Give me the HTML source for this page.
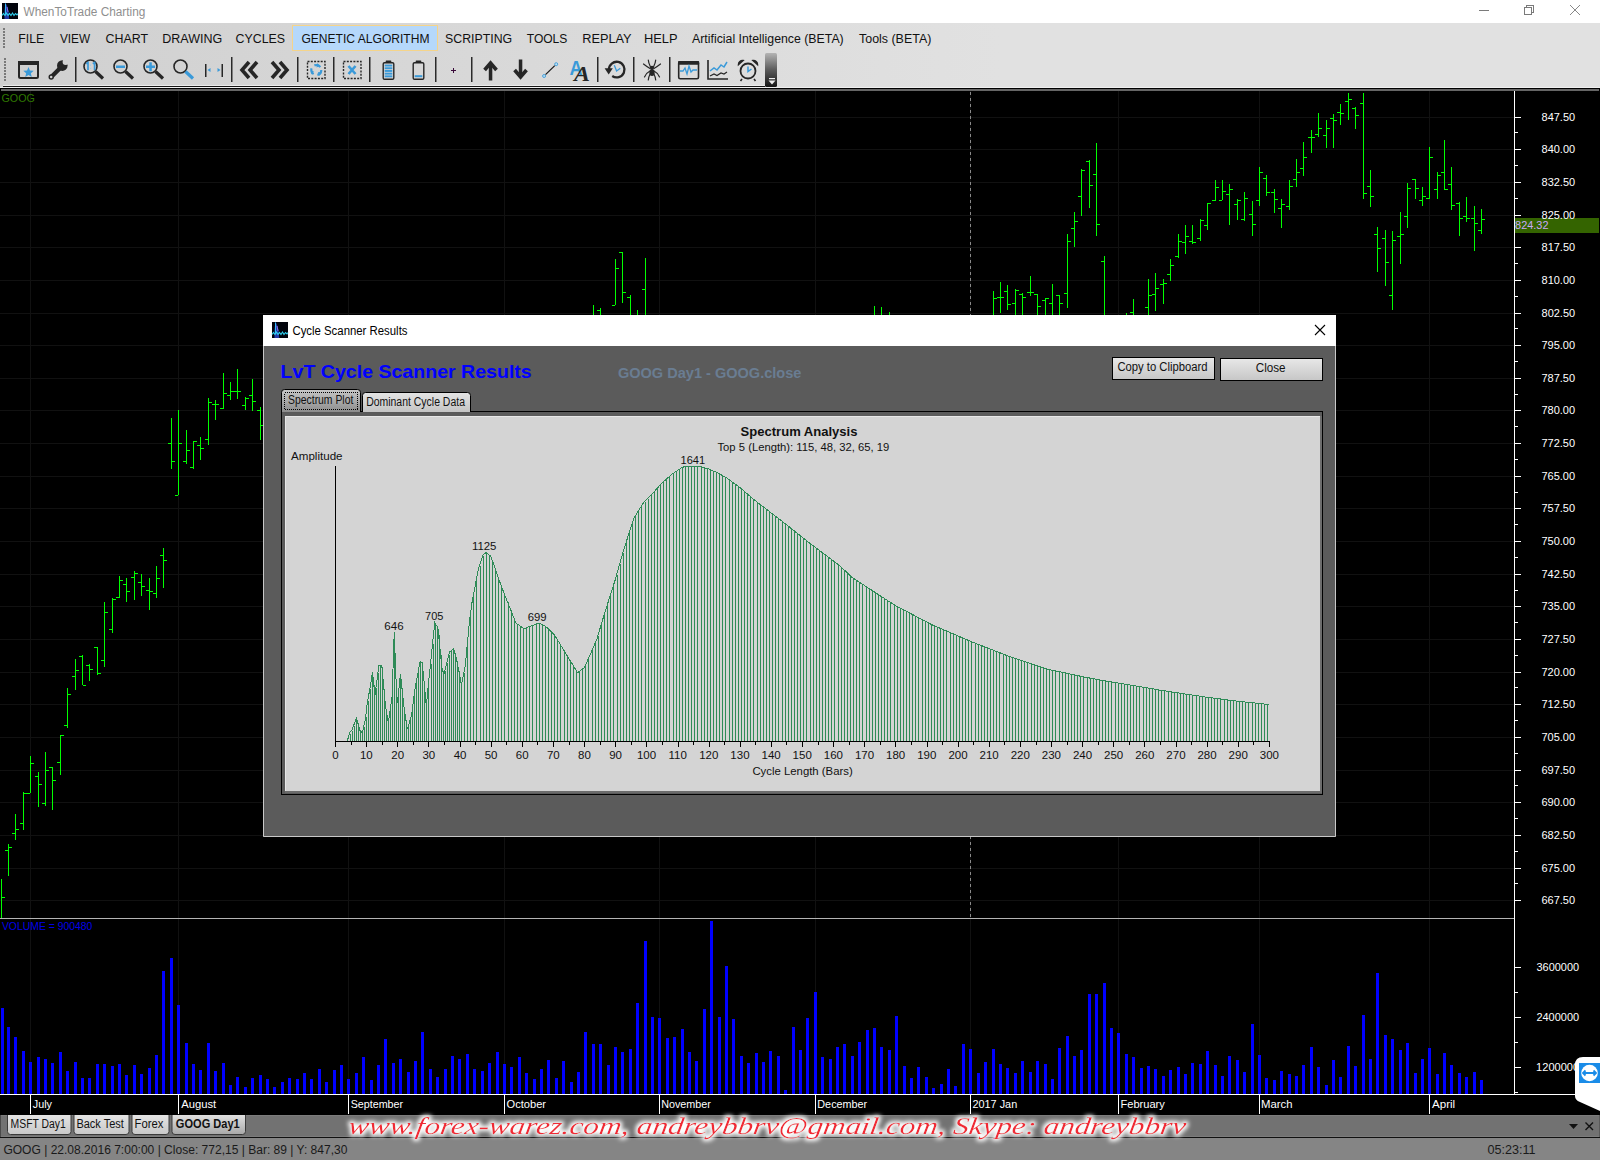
<!DOCTYPE html>
<html><head><meta charset="utf-8"><style>html,body{margin:0;padding:0;width:1600px;height:1160px;overflow:hidden;background:#000;font-family:"Liberation Sans",sans-serif;white-space:nowrap}svg{overflow:hidden}</style></head><body>
<svg style="position:absolute;left:0;top:0" width="1600" height="1160" shape-rendering="crispEdges"><rect x="0" y="91" width="1600" height="1024" fill="#000"/><path d="M0 117.5H1514 M0 149.5H1514 M0 182.5H1514 M0 215.5H1514 M0 247.5H1514 M0 280.5H1514 M0 313.5H1514 M0 345.5H1514 M0 378.5H1514 M0 410.5H1514 M0 443.5H1514 M0 476.5H1514 M0 508.5H1514 M0 541.5H1514 M0 574.5H1514 M0 606.5H1514 M0 639.5H1514 M0 672.5H1514 M0 704.5H1514 M0 737.5H1514 M0 770.5H1514 M0 802.5H1514 M0 835.5H1514 M0 868.5H1514 M0 900.5H1514" stroke="#111111" stroke-width="1" fill="none"/><path d="M30.5 91V1094 M178.5 91V1094 M348.5 91V1094 M504.5 91V1094 M659.5 91V1094 M815.5 91V1094 M1118.5 91V1094 M1259.5 91V1094 M1429.5 91V1094" stroke="#111111" stroke-width="1" fill="none"/><path d="M970.5 91V918" stroke="#111111" stroke-width="1" fill="none"/><path d="M970.5 92V918" stroke="#8a8a8a" stroke-width="1" stroke-dasharray="3,3" fill="none"/><path d="M970.5 918V1094" stroke="#111111" stroke-width="1" fill="none"/><rect x="0" y="918" width="1514" height="1" fill="#b4b4b4"/><path d="M1.5 879V918 M2 897.5H5 M8.5 844V876 M5 850.5H8 M9 847.5H12 M15.5 814V840 M12 833.5H15 M16 829.5H19 M23.5 792V830 M20 823.5H23 M24 793.5H27 M30.5 756V793 M27 793.5H30 M31 763.5H34 M38.5 772V807 M35 776.5H38 M39 784.5H42 M45.5 752V806 M42 803.5H45 M46 770.5H49 M52.5 767V810 M49 767.5H52 M53 780.5H56 M60.5 735V775 M57 762.5H60 M61 735.5H64 M67.5 688V728 M64 725.5H67 M68 694.5H71 M75.5 659V690 M72 676.5H75 M76 670.5H79 M82.5 655V685 M79 656.5H82 M83 685.5H86 M89.5 664V681 M86 665.5H89 M90 669.5H93 M97.5 647V675 M94 647.5H97 M98 673.5H101 M104.5 602V667 M101 660.5H104 M105 612.5H108 M112.5 598V633 M109 629.5H112 M113 599.5H116 M119.5 576V598 M116 597.5H119 M120 580.5H123 M126.5 578V602 M123 584.5H126 M127 591.5H130 M134.5 571V600 M131 577.5H134 M135 573.5H138 M141.5 574V596 M138 582.5H141 M142 586.5H145 M149.5 578V610 M146 590.5H149 M150 591.5H153 M156.5 566V598 M153 593.5H156 M157 578.5H160 M163.5 548V588 M160 555.5H163 M164 560.5H167 M171.5 418V469 M168 443.5H171 M172 461.5H175 M178.5 410V495 M175 495.5H178 M179 443.5H182 M186.5 430V464 M183 461.5H186 M187 450.5H190 M193.5 441V469 M190 467.5H193 M194 441.5H197 M200.5 437V460 M197 445.5H200 M201 448.5H204 M208.5 398V445 M205 439.5H208 M209 402.5H212 M215.5 400V420 M212 404.5H215 M216 404.5H219 M223.5 373V409 M220 408.5H223 M224 393.5H227 M230.5 382V400 M227 395.5H230 M231 391.5H234 M237.5 369V399 M234 391.5H237 M238 391.5H241 M245.5 397V410 M242 405.5H245 M246 398.5H249 M252.5 379V411 M249 395.5H252 M253 401.5H256 M260.5 407V440 M257 410.5H260 M261 425.5H264 M593.5 305V330 M600.5 308V330 M597 310.5H600 M615.5 259V305 M612 305.5H615 M616 268.5H619 M622.5 252V303 M619 252.5H622 M623 292.5H626 M630.5 295V330 M627 297.5H630 M637.5 310V330 M645.5 258V330 M642 289.5H645 M874.5 306V330 M881.5 307V330 M889.5 312V330 M993.5 291V330 M994 298.5H997 M1000.5 282V313 M997 297.5H1000 M1001 297.5H1004 M1007.5 285V310 M1004 291.5H1007 M1008 304.5H1011 M1015.5 289V330 M1012 303.5H1015 M1016 290.5H1019 M1022.5 293V330 M1019 294.5H1022 M1023 297.5H1026 M1030.5 276V296 M1027 292.5H1030 M1031 292.5H1034 M1037.5 294V330 M1034 294.5H1037 M1038 306.5H1041 M1045.5 298V330 M1042 300.5H1045 M1046 298.5H1049 M1052.5 284V330 M1049 303.5H1052 M1059.5 295V330 M1056 295.5H1059 M1060 303.5H1063 M1067.5 234V308 M1064 293.5H1067 M1068 241.5H1071 M1074.5 212V247 M1071 228.5H1074 M1075 221.5H1078 M1081.5 169V216 M1078 196.5H1081 M1082 170.5H1085 M1089.5 160V208 M1086 161.5H1089 M1090 185.5H1093 M1096.5 143V236 M1093 174.5H1096 M1097 224.5H1100 M1104.5 256V330 M1101 261.5H1104 M1126.5 313V330 M1133.5 299V330 M1130 312.5H1133 M1148.5 279V330 M1145 307.5H1148 M1149 295.5H1152 M1155.5 273V311 M1152 294.5H1155 M1156 288.5H1159 M1163.5 279V304 M1160 284.5H1163 M1164 283.5H1167 M1170.5 259V281 M1167 274.5H1170 M1171 265.5H1174 M1178.5 234V258 M1175 256.5H1178 M1179 241.5H1182 M1185.5 225V254 M1182 242.5H1185 M1186 236.5H1189 M1192.5 225V244 M1189 241.5H1192 M1193 242.5H1196 M1200.5 219V241 M1197 238.5H1200 M1201 220.5H1204 M1207.5 203V230 M1204 225.5H1207 M1208 203.5H1211 M1215.5 180V201 M1212 200.5H1215 M1216 187.5H1219 M1222.5 180V200 M1219 200.5H1222 M1223 191.5H1226 M1229.5 184V225 M1226 194.5H1229 M1230 189.5H1233 M1237.5 199V220 M1234 204.5H1237 M1238 200.5H1241 M1244.5 192V221 M1241 219.5H1244 M1245 198.5H1248 M1252.5 201V236 M1249 214.5H1252 M1253 224.5H1256 M1259.5 167V206 M1256 200.5H1259 M1260 172.5H1263 M1266.5 175V196 M1263 178.5H1266 M1267 192.5H1270 M1274.5 189V213 M1271 192.5H1274 M1275 199.5H1278 M1281.5 199V228 M1278 208.5H1281 M1282 204.5H1285 M1289.5 180V210 M1286 206.5H1289 M1290 186.5H1293 M1296.5 159V187 M1293 179.5H1296 M1297 172.5H1300 M1303.5 142V176 M1300 168.5H1303 M1304 157.5H1307 M1311.5 130V153 M1308 137.5H1311 M1312 137.5H1315 M1318.5 113V137 M1315 134.5H1318 M1319 128.5H1322 M1326.5 120V148 M1323 135.5H1326 M1327 128.5H1330 M1333.5 114V148 M1330 118.5H1333 M1334 120.5H1337 M1340.5 104V125 M1337 112.5H1340 M1341 113.5H1344 M1348.5 93V120 M1345 101.5H1348 M1349 99.5H1352 M1355.5 107V129 M1352 108.5H1355 M1356 115.5H1359 M1363.5 93V199 M1360 103.5H1363 M1364 193.5H1367 M1370.5 170V207 M1367 186.5H1370 M1371 196.5H1374 M1377.5 227V272 M1374 234.5H1377 M1378 248.5H1381 M1385.5 230V286 M1382 238.5H1385 M1386 262.5H1389 M1392.5 231V310 M1389 295.5H1392 M1393 240.5H1396 M1400.5 212V264 M1397 236.5H1400 M1401 234.5H1404 M1407.5 183V228 M1404 216.5H1407 M1408 188.5H1411 M1415.5 179V199 M1412 179.5H1415 M1416 188.5H1419 M1422.5 187V206 M1419 200.5H1422 M1423 196.5H1426 M1429.5 147V199 M1426 198.5H1429 M1430 157.5H1433 M1437.5 172V199 M1434 189.5H1437 M1438 175.5H1441 M1444.5 140V190 M1441 172.5H1444 M1445 189.5H1448 M1451.5 167V210 M1448 184.5H1451 M1452 205.5H1455 M1459.5 202V236 M1456 203.5H1459 M1460 218.5H1463 M1466.5 197V222 M1463 216.5H1466 M1467 218.5H1470 M1474.5 206V251 M1471 218.5H1474 M1475 223.5H1478 M1481.5 209V234 M1478 230.5H1481 M1482 219.5H1485" stroke="#00ff00" stroke-width="1" fill="none"/><path d="M1 1008h3V1094h-3Z M7 1027h3V1094h-3Z M14 1037h3V1094h-3Z M22 1051h3V1094h-3Z M29 1062h3V1094h-3Z M37 1057h3V1094h-3Z M44 1059h3V1094h-3Z M51 1063h3V1094h-3Z M59 1052h3V1094h-3Z M66 1071h3V1094h-3Z M74 1062h3V1094h-3Z M81 1078h3V1094h-3Z M88 1078h3V1094h-3Z M96 1064h3V1094h-3Z M103 1064h3V1094h-3Z M111 1066h3V1094h-3Z M118 1064h3V1094h-3Z M125 1075h3V1094h-3Z M133 1065h3V1094h-3Z M140 1074h3V1094h-3Z M148 1068h3V1094h-3Z M155 1055h3V1094h-3Z M162 971h3V1094h-3Z M170 958h3V1094h-3Z M177 1005h3V1094h-3Z M185 1043h3V1094h-3Z M192 1064h3V1094h-3Z M199 1070h3V1094h-3Z M207 1043h3V1094h-3Z M214 1071h3V1094h-3Z M222 1063h3V1094h-3Z M229 1085h3V1094h-3Z M236 1077h3V1094h-3Z M244 1087h3V1094h-3Z M251 1078h3V1094h-3Z M259 1075h3V1094h-3Z M266 1079h3V1094h-3Z M273 1087h3V1094h-3Z M281 1082h3V1094h-3Z M288 1078h3V1094h-3Z M296 1079h3V1094h-3Z M303 1073h3V1094h-3Z M310 1079h3V1094h-3Z M318 1069h3V1094h-3Z M325 1082h3V1094h-3Z M333 1070h3V1094h-3Z M340 1065h3V1094h-3Z M347 1079h3V1094h-3Z M355 1073h3V1094h-3Z M362 1057h3V1094h-3Z M370 1080h3V1094h-3Z M377 1065h3V1094h-3Z M384 1039h3V1094h-3Z M392 1063h3V1094h-3Z M399 1059h3V1094h-3Z M407 1072h3V1094h-3Z M414 1061h3V1094h-3Z M421 1032h3V1094h-3Z M429 1069h3V1094h-3Z M436 1077h3V1094h-3Z M444 1069h3V1094h-3Z M451 1056h3V1094h-3Z M458 1059h3V1094h-3Z M466 1054h3V1094h-3Z M473 1069h3V1094h-3Z M481 1071h3V1094h-3Z M488 1063h3V1094h-3Z M496 1052h3V1094h-3Z M503 1064h3V1094h-3Z M510 1067h3V1094h-3Z M518 1057h3V1094h-3Z M525 1073h3V1094h-3Z M533 1079h3V1094h-3Z M540 1069h3V1094h-3Z M547 1060h3V1094h-3Z M555 1078h3V1094h-3Z M562 1061h3V1094h-3Z M570 1082h3V1094h-3Z M577 1072h3V1094h-3Z M584 1032h3V1094h-3Z M592 1044h3V1094h-3Z M599 1044h3V1094h-3Z M607 1065h3V1094h-3Z M614 1047h3V1094h-3Z M621 1052h3V1094h-3Z M629 1049h3V1094h-3Z M636 1003h3V1094h-3Z M644 941h3V1094h-3Z M651 1017h3V1094h-3Z M658 1018h3V1094h-3Z M666 1038h3V1094h-3Z M673 1037h3V1094h-3Z M681 1029h3V1094h-3Z M688 1052h3V1094h-3Z M695 1061h3V1094h-3Z M703 1009h3V1094h-3Z M710 921h3V1094h-3Z M718 1017h3V1094h-3Z M725 966h3V1094h-3Z M732 1019h3V1094h-3Z M740 1056h3V1094h-3Z M747 1063h3V1094h-3Z M755 1053h3V1094h-3Z M762 1062h3V1094h-3Z M769 1051h3V1094h-3Z M777 1056h3V1094h-3Z M784 1090h3V1094h-3Z M792 1027h3V1094h-3Z M799 1050h3V1094h-3Z M806 1018h3V1094h-3Z M814 992h3V1094h-3Z M821 1057h3V1094h-3Z M829 1059h3V1094h-3Z M836 1047h3V1094h-3Z M843 1044h3V1094h-3Z M851 1056h3V1094h-3Z M858 1042h3V1094h-3Z M866 1030h3V1094h-3Z M873 1028h3V1094h-3Z M880 1047h3V1094h-3Z M888 1050h3V1094h-3Z M895 1016h3V1094h-3Z M903 1066h3V1094h-3Z M910 1078h3V1094h-3Z M917 1067h3V1094h-3Z M925 1077h3V1094h-3Z M932 1088h3V1094h-3Z M940 1084h3V1094h-3Z M947 1069h3V1094h-3Z M954 1086h3V1094h-3Z M962 1044h3V1094h-3Z M969 1049h3V1094h-3Z M977 1073h3V1094h-3Z M984 1062h3V1094h-3Z M992 1049h3V1094h-3Z M999 1064h3V1094h-3Z M1006 1068h3V1094h-3Z M1014 1073h3V1094h-3Z M1021 1061h3V1094h-3Z M1029 1072h3V1094h-3Z M1036 1061h3V1094h-3Z M1044 1064h3V1094h-3Z M1051 1079h3V1094h-3Z M1058 1048h3V1094h-3Z M1066 1036h3V1094h-3Z M1073 1056h3V1094h-3Z M1080 1050h3V1094h-3Z M1088 994h3V1094h-3Z M1095 994h3V1094h-3Z M1103 983h3V1094h-3Z M1110 1028h3V1094h-3Z M1117 1033h3V1094h-3Z M1125 1054h3V1094h-3Z M1132 1057h3V1094h-3Z M1140 1068h3V1094h-3Z M1147 1066h3V1094h-3Z M1154 1069h3V1094h-3Z M1162 1076h3V1094h-3Z M1169 1070h3V1094h-3Z M1177 1067h3V1094h-3Z M1184 1074h3V1094h-3Z M1191 1063h3V1094h-3Z M1199 1064h3V1094h-3Z M1206 1051h3V1094h-3Z M1214 1065h3V1094h-3Z M1221 1076h3V1094h-3Z M1228 1056h3V1094h-3Z M1236 1060h3V1094h-3Z M1243 1072h3V1094h-3Z M1251 1024h3V1094h-3Z M1258 1055h3V1094h-3Z M1265 1078h3V1094h-3Z M1273 1080h3V1094h-3Z M1280 1071h3V1094h-3Z M1288 1074h3V1094h-3Z M1295 1076h3V1094h-3Z M1302 1065h3V1094h-3Z M1310 1047h3V1094h-3Z M1317 1067h3V1094h-3Z M1325 1085h3V1094h-3Z M1332 1060h3V1094h-3Z M1339 1077h3V1094h-3Z M1347 1046h3V1094h-3Z M1354 1066h3V1094h-3Z M1362 1015h3V1094h-3Z M1369 1059h3V1094h-3Z M1376 973h3V1094h-3Z M1384 1035h3V1094h-3Z M1391 1039h3V1094h-3Z M1399 1050h3V1094h-3Z M1406 1043h3V1094h-3Z M1414 1073h3V1094h-3Z M1421 1059h3V1094h-3Z M1428 1048h3V1094h-3Z M1436 1074h3V1094h-3Z M1443 1053h3V1094h-3Z M1450 1065h3V1094h-3Z M1458 1073h3V1094h-3Z M1465 1077h3V1094h-3Z M1473 1072h3V1094h-3Z M1480 1080h3V1094h-3Z" fill="#0000ff"/><rect x="0" y="1094" width="1600" height="1" fill="#fff"/><rect x="1514" y="91" width="1" height="1003" fill="#fff"/><path d="M1515 117.5H1521 M1515 132.5H1518 M1515 149.5H1521 M1515 165.5H1518 M1515 182.5H1521 M1515 198.5H1518 M1515 215.5H1521 M1515 230.5H1518 M1515 247.5H1521 M1515 263.5H1518 M1515 280.5H1521 M1515 296.5H1518 M1515 313.5H1521 M1515 328.5H1518 M1515 345.5H1521 M1515 361.5H1518 M1515 378.5H1521 M1515 394.5H1518 M1515 410.5H1521 M1515 426.5H1518 M1515 443.5H1521 M1515 459.5H1518 M1515 476.5H1521 M1515 492.5H1518 M1515 508.5H1521 M1515 524.5H1518 M1515 541.5H1521 M1515 557.5H1518 M1515 574.5H1521 M1515 590.5H1518 M1515 606.5H1521 M1515 622.5H1518 M1515 639.5H1521 M1515 655.5H1518 M1515 672.5H1521 M1515 687.5H1518 M1515 704.5H1521 M1515 720.5H1518 M1515 737.5H1521 M1515 753.5H1518 M1515 770.5H1521 M1515 785.5H1518 M1515 802.5H1521 M1515 818.5H1518 M1515 835.5H1521 M1515 851.5H1518 M1515 868.5H1521 M1515 883.5H1518 M1515 900.5H1521 M1515 967.5H1521 M1515 1017.5H1521 M1515 1067.5H1521 M1515 992.5H1518 M1515 1042.5H1518 M1515 1092.5H1518" stroke="#fff" stroke-width="1" fill="none"/><path d="M30.5 1095V1114 M178.5 1095V1114 M348.5 1095V1114 M504.5 1095V1114 M659.5 1095V1114 M815.5 1095V1114 M970.5 1095V1114 M1118.5 1095V1114 M1259.5 1095V1114 M1429.5 1095V1114" stroke="#fff" stroke-width="1" fill="none"/><rect x="1515" y="218" width="84" height="15" fill="#346400"/><text x="1541.56" y="121.30" font-family='"Liberation Sans",sans-serif' font-size="11" font-weight="normal" fill="#fff" textLength="33.56" lengthAdjust="spacingAndGlyphs" >847.50</text><text x="1541.56" y="153.30" font-family='"Liberation Sans",sans-serif' font-size="11" font-weight="normal" fill="#fff" textLength="33.56" lengthAdjust="spacingAndGlyphs" >840.00</text><text x="1541.56" y="186.30" font-family='"Liberation Sans",sans-serif' font-size="11" font-weight="normal" fill="#fff" textLength="33.56" lengthAdjust="spacingAndGlyphs" >832.50</text><text x="1541.56" y="219.30" font-family='"Liberation Sans",sans-serif' font-size="11" font-weight="normal" fill="#fff" textLength="33.56" lengthAdjust="spacingAndGlyphs" >825.00</text><text x="1541.56" y="251.30" font-family='"Liberation Sans",sans-serif' font-size="11" font-weight="normal" fill="#fff" textLength="33.56" lengthAdjust="spacingAndGlyphs" >817.50</text><text x="1541.56" y="284.30" font-family='"Liberation Sans",sans-serif' font-size="11" font-weight="normal" fill="#fff" textLength="33.56" lengthAdjust="spacingAndGlyphs" >810.00</text><text x="1541.56" y="317.30" font-family='"Liberation Sans",sans-serif' font-size="11" font-weight="normal" fill="#fff" textLength="33.56" lengthAdjust="spacingAndGlyphs" >802.50</text><text x="1541.45" y="349.30" font-family='"Liberation Sans",sans-serif' font-size="11" font-weight="normal" fill="#fff" textLength="33.67" lengthAdjust="spacingAndGlyphs" >795.00</text><text x="1541.45" y="382.30" font-family='"Liberation Sans",sans-serif' font-size="11" font-weight="normal" fill="#fff" textLength="33.67" lengthAdjust="spacingAndGlyphs" >787.50</text><text x="1541.45" y="414.30" font-family='"Liberation Sans",sans-serif' font-size="11" font-weight="normal" fill="#fff" textLength="33.67" lengthAdjust="spacingAndGlyphs" >780.00</text><text x="1541.45" y="447.30" font-family='"Liberation Sans",sans-serif' font-size="11" font-weight="normal" fill="#fff" textLength="33.67" lengthAdjust="spacingAndGlyphs" >772.50</text><text x="1541.45" y="480.30" font-family='"Liberation Sans",sans-serif' font-size="11" font-weight="normal" fill="#fff" textLength="33.67" lengthAdjust="spacingAndGlyphs" >765.00</text><text x="1541.45" y="512.30" font-family='"Liberation Sans",sans-serif' font-size="11" font-weight="normal" fill="#fff" textLength="33.67" lengthAdjust="spacingAndGlyphs" >757.50</text><text x="1541.45" y="545.30" font-family='"Liberation Sans",sans-serif' font-size="11" font-weight="normal" fill="#fff" textLength="33.67" lengthAdjust="spacingAndGlyphs" >750.00</text><text x="1541.45" y="578.30" font-family='"Liberation Sans",sans-serif' font-size="11" font-weight="normal" fill="#fff" textLength="33.67" lengthAdjust="spacingAndGlyphs" >742.50</text><text x="1541.45" y="610.30" font-family='"Liberation Sans",sans-serif' font-size="11" font-weight="normal" fill="#fff" textLength="33.67" lengthAdjust="spacingAndGlyphs" >735.00</text><text x="1541.45" y="643.30" font-family='"Liberation Sans",sans-serif' font-size="11" font-weight="normal" fill="#fff" textLength="33.67" lengthAdjust="spacingAndGlyphs" >727.50</text><text x="1541.45" y="676.30" font-family='"Liberation Sans",sans-serif' font-size="11" font-weight="normal" fill="#fff" textLength="33.67" lengthAdjust="spacingAndGlyphs" >720.00</text><text x="1541.45" y="708.30" font-family='"Liberation Sans",sans-serif' font-size="11" font-weight="normal" fill="#fff" textLength="33.67" lengthAdjust="spacingAndGlyphs" >712.50</text><text x="1541.45" y="741.30" font-family='"Liberation Sans",sans-serif' font-size="11" font-weight="normal" fill="#fff" textLength="33.67" lengthAdjust="spacingAndGlyphs" >705.00</text><text x="1541.45" y="774.30" font-family='"Liberation Sans",sans-serif' font-size="11" font-weight="normal" fill="#fff" textLength="33.67" lengthAdjust="spacingAndGlyphs" >697.50</text><text x="1541.45" y="806.30" font-family='"Liberation Sans",sans-serif' font-size="11" font-weight="normal" fill="#fff" textLength="33.67" lengthAdjust="spacingAndGlyphs" >690.00</text><text x="1541.45" y="839.30" font-family='"Liberation Sans",sans-serif' font-size="11" font-weight="normal" fill="#fff" textLength="33.67" lengthAdjust="spacingAndGlyphs" >682.50</text><text x="1541.45" y="872.30" font-family='"Liberation Sans",sans-serif' font-size="11" font-weight="normal" fill="#fff" textLength="33.67" lengthAdjust="spacingAndGlyphs" >675.00</text><text x="1541.45" y="904.30" font-family='"Liberation Sans",sans-serif' font-size="11" font-weight="normal" fill="#fff" textLength="33.67" lengthAdjust="spacingAndGlyphs" >667.50</text><text x="1536.56" y="971.25" font-family='"Liberation Sans",sans-serif' font-size="11" font-weight="normal" fill="#fff" textLength="42.54" lengthAdjust="spacingAndGlyphs" >3600000</text><text x="1536.45" y="1021.25" font-family='"Liberation Sans",sans-serif' font-size="11" font-weight="normal" fill="#fff" textLength="42.66" lengthAdjust="spacingAndGlyphs" >2400000</text><text x="1536.12" y="1071.25" font-family='"Liberation Sans",sans-serif' font-size="11" font-weight="normal" fill="#fff" textLength="42.99" lengthAdjust="spacingAndGlyphs" >1200000</text><text x="1515.06" y="229.00" font-family='"Liberation Sans",sans-serif' font-size="11" font-weight="normal" fill="#c8a8f8" textLength="33.47" lengthAdjust="spacingAndGlyphs" >824.32</text><text x="1.46" y="102.00" font-family='"Liberation Sans",sans-serif' font-size="11" font-weight="normal" fill="#2f7800" textLength="33.41" lengthAdjust="spacingAndGlyphs" >GOOG</text><text x="1.90" y="930.00" font-family='"Liberation Sans",sans-serif' font-size="11" font-weight="normal" fill="#0000e8" textLength="90.51" lengthAdjust="spacingAndGlyphs" >VOLUME = 900480</text><text x="32.78" y="1108.20" font-family='"Liberation Sans",sans-serif' font-size="11" font-weight="normal" fill="#fff" textLength="19.20" lengthAdjust="spacingAndGlyphs" >July</text><text x="181.20" y="1108.20" font-family='"Liberation Sans",sans-serif' font-size="11" font-weight="normal" fill="#fff" textLength="34.94" lengthAdjust="spacingAndGlyphs" >August</text><text x="350.66" y="1108.20" font-family='"Liberation Sans",sans-serif' font-size="11" font-weight="normal" fill="#fff" textLength="52.36" lengthAdjust="spacingAndGlyphs" >September</text><text x="506.54" y="1108.20" font-family='"Liberation Sans",sans-serif' font-size="11" font-weight="normal" fill="#fff" textLength="39.54" lengthAdjust="spacingAndGlyphs" >October</text><text x="661.14" y="1108.20" font-family='"Liberation Sans",sans-serif' font-size="11" font-weight="normal" fill="#fff" textLength="49.70" lengthAdjust="spacingAndGlyphs" >November</text><text x="817.34" y="1108.20" font-family='"Liberation Sans",sans-serif' font-size="11" font-weight="normal" fill="#fff" textLength="49.80" lengthAdjust="spacingAndGlyphs" >December</text><text x="972.46" y="1108.20" font-family='"Liberation Sans",sans-serif' font-size="11" font-weight="normal" fill="#fff" textLength="44.74" lengthAdjust="spacingAndGlyphs" >2017 Jan</text><text x="1120.51" y="1108.20" font-family='"Liberation Sans",sans-serif' font-size="11" font-weight="normal" fill="#fff" textLength="44.30" lengthAdjust="spacingAndGlyphs" >February</text><text x="1261.10" y="1108.20" font-family='"Liberation Sans",sans-serif' font-size="11" font-weight="normal" fill="#fff" textLength="31.43" lengthAdjust="spacingAndGlyphs" >March</text><text x="1432.00" y="1108.20" font-family='"Liberation Sans",sans-serif' font-size="11" font-weight="normal" fill="#fff" textLength="23.20" lengthAdjust="spacingAndGlyphs" >April</text></svg>
<div style="position:absolute;left:0;top:0;width:1600px;height:23px;background:#fff"></div>
<div style="position:absolute;left:0;top:23px;width:1600px;height:64px;background:linear-gradient(to right,#d0d0d0 0px,#e1e1e1 1000px,#e1e1e1 1600px)"></div>
<div style="position:absolute;left:3px;top:85px;width:762px;height:1px;background:#ececec"></div>
<div style="position:absolute;left:3px;top:86px;width:762px;height:1px;background:#161616"></div>
<div style="position:absolute;left:0;top:87px;width:1600px;height:1px;background:#f0f0f0"></div>
<div style="position:absolute;left:0;top:88px;width:1600px;height:1px;background:#000"></div>
<div style="position:absolute;left:1px;top:89px;width:1598px;height:2px;background:#666"></div>
<svg style="position:absolute;left:0;top:0" width="1600" height="1160"><g transform="translate(2,3)"><rect width="16" height="16" fill="#02040c"/><path d="M2.5 16V9Q3 2 3.6 0Q5.5 3 6.5 8L7.2 16Z" fill="#2638a8"/><path d="M3.5 0.5V12" stroke="#38b8f8" stroke-width="1"/><path d="M5 4L6 9" stroke="#8a78e8" stroke-width="1"/><path d="M0 12.5L1.5 10.5L3 12.5L4.5 10L6 12.5L7.5 10.5L9 12.5L10.5 10L12 12.5L13.5 10.5L15 12L16 10.5" stroke="#30d0f0" stroke-width="1.1" fill="none"/></g><text x="23.50" y="16.00" font-family='"Liberation Sans",sans-serif' font-size="12" font-weight="normal" fill="#8f8f8f" textLength="121.84" lengthAdjust="spacingAndGlyphs" >WhenToTrade Charting</text><path d="M1479 10.5H1489" stroke="#7a7a7a" stroke-width="1"/><path d="M1524.5 7.5H1531.5V14.5H1524.5Z M1526.5 7.5V5.5H1533.5V12.5H1531.5" stroke="#7a7a7a" stroke-width="1" fill="none" shape-rendering="crispEdges"/><path d="M1570 5L1580 15M1580 5L1570 15" stroke="#7a7a7a" stroke-width="0.9"/><rect x="3" y="28" width="2" height="2" fill="#7a7a7a"/><rect x="3" y="31" width="2" height="2" fill="#7a7a7a"/><rect x="3" y="34" width="2" height="2" fill="#7a7a7a"/><rect x="3" y="37" width="2" height="2" fill="#7a7a7a"/><rect x="3" y="40" width="2" height="2" fill="#7a7a7a"/><rect x="3" y="43" width="2" height="2" fill="#7a7a7a"/><rect x="3" y="46" width="2" height="2" fill="#7a7a7a"/><rect x="4" y="58" width="2" height="2" fill="#7a7a7a"/><rect x="4" y="61" width="2" height="2" fill="#7a7a7a"/><rect x="4" y="64" width="2" height="2" fill="#7a7a7a"/><rect x="4" y="67" width="2" height="2" fill="#7a7a7a"/><rect x="4" y="70" width="2" height="2" fill="#7a7a7a"/><rect x="4" y="73" width="2" height="2" fill="#7a7a7a"/><rect x="4" y="76" width="2" height="2" fill="#7a7a7a"/><rect x="4" y="79" width="2" height="2" fill="#7a7a7a"/><rect x="292.5" y="25.5" width="145" height="25" fill="#b5d8fb" stroke="#f5d48a" stroke-width="1"/><text x="18.27" y="43.00" font-family='"Liberation Sans",sans-serif' font-size="12" font-weight="normal" fill="#111" textLength="26.00" lengthAdjust="spacingAndGlyphs" >FILE</text><text x="59.88" y="43.00" font-family='"Liberation Sans",sans-serif' font-size="12" font-weight="normal" fill="#111" textLength="30.19" lengthAdjust="spacingAndGlyphs" >VIEW</text><text x="105.63" y="43.00" font-family='"Liberation Sans",sans-serif' font-size="12" font-weight="normal" fill="#111" textLength="42.57" lengthAdjust="spacingAndGlyphs" >CHART</text><text x="162.25" y="43.00" font-family='"Liberation Sans",sans-serif' font-size="12" font-weight="normal" fill="#111" textLength="59.95" lengthAdjust="spacingAndGlyphs" >DRAWING</text><text x="235.63" y="43.00" font-family='"Liberation Sans",sans-serif' font-size="12" font-weight="normal" fill="#111" textLength="49.51" lengthAdjust="spacingAndGlyphs" >CYCLES</text><text x="301.40" y="43.00" font-family='"Liberation Sans",sans-serif' font-size="12" font-weight="normal" fill="#111" textLength="128.10" lengthAdjust="spacingAndGlyphs" >GENETIC ALGORITHM</text><text x="445.13" y="43.00" font-family='"Liberation Sans",sans-serif' font-size="12" font-weight="normal" fill="#111" textLength="67.04" lengthAdjust="spacingAndGlyphs" >SCRIPTING</text><text x="526.76" y="43.00" font-family='"Liberation Sans",sans-serif' font-size="12" font-weight="normal" fill="#111" textLength="40.61" lengthAdjust="spacingAndGlyphs" >TOOLS</text><text x="582.23" y="43.00" font-family='"Liberation Sans",sans-serif' font-size="12" font-weight="normal" fill="#111" textLength="49.30" lengthAdjust="spacingAndGlyphs" >REPLAY</text><text x="643.97" y="43.00" font-family='"Liberation Sans",sans-serif' font-size="12" font-weight="normal" fill="#111" textLength="33.57" lengthAdjust="spacingAndGlyphs" >HELP</text><text x="692.00" y="43.00" font-family='"Liberation Sans",sans-serif' font-size="12" font-weight="normal" fill="#111" textLength="151.72" lengthAdjust="spacingAndGlyphs" >Artificial Intelligence (BETA)</text><text x="859.00" y="43.00" font-family='"Liberation Sans",sans-serif' font-size="12" font-weight="normal" fill="#111" textLength="72.32" lengthAdjust="spacingAndGlyphs" >Tools (BETA)</text></svg>
<svg style="position:absolute;left:0;top:0" width="800" height="90">
<rect x="19" y="62" width="19" height="16" rx="1.5" fill="none" stroke="#262626" stroke-width="2"/><rect x="18" y="61" width="21" height="4" fill="#262626"/>
<polygon points="28.50,67.00 29.95,70.50 33.73,70.80 30.85,73.26 31.73,76.95 28.50,74.97 25.27,76.95 26.15,73.26 23.27,70.80 27.05,70.50" fill="#3a9ad9"/>
<defs><mask id="wm"><rect x="40" y="55" width="35" height="30" fill="#fff"/><circle cx="65.6" cy="62.1" r="3.0" fill="#000"/><circle cx="51.2" cy="77" r="1.25" fill="#000"/></mask></defs><g mask="url(#wm)"><path d="M51.2 77L60 68.3" stroke="#262626" stroke-width="4.2"/><circle cx="51.2" cy="77" r="2.7" fill="#262626"/><circle cx="62.3" cy="65.6" r="5.3" fill="#262626"/></g>
<rect x="75" y="57" width="1.5" height="25" fill="#2a2a2a"/>
<rect x="231" y="57" width="1.5" height="25" fill="#2a2a2a"/>
<rect x="297" y="57" width="1.5" height="25" fill="#2a2a2a"/>
<rect x="333" y="57" width="1.5" height="25" fill="#2a2a2a"/>
<rect x="369" y="57" width="1.5" height="25" fill="#2a2a2a"/>
<rect x="435" y="57" width="1.5" height="25" fill="#2a2a2a"/>
<rect x="471" y="57" width="1.5" height="25" fill="#2a2a2a"/>
<rect x="597" y="57" width="1.5" height="25" fill="#2a2a2a"/>
<rect x="633" y="57" width="1.5" height="25" fill="#2a2a2a"/>
<rect x="669" y="57" width="1.5" height="25" fill="#2a2a2a"/>
<circle cx="90.5" cy="66.5" r="6.5" fill="none" stroke="#262626" stroke-width="1.6"/><path d="M95.5 71.5L103.0 78.5" stroke="#262626" stroke-width="3.2" stroke-linecap="butt"/>
<path d="M86.2 63.8L88 62.6V70.2M92.8 63.8L94.6 62.6V70.2" stroke="#3a9ad9" stroke-width="1.7" fill="none"/><rect x="89.9" y="64.6" width="1.2" height="1.2" fill="#9fd0e8"/><rect x="89.9" y="67.8" width="1.2" height="1.2" fill="#9fd0e8"/>
<circle cx="120.5" cy="66.5" r="6.5" fill="none" stroke="#262626" stroke-width="1.6"/><path d="M125.5 71.5L133.0 78.5" stroke="#262626" stroke-width="3.2" stroke-linecap="butt"/>
<rect x="116" y="65.5" width="9" height="2.5" fill="#3a9ad9"/>
<circle cx="150.5" cy="66.5" r="6.5" fill="none" stroke="#262626" stroke-width="1.6"/><path d="M155.5 71.5L163.0 78.5" stroke="#262626" stroke-width="3.2" stroke-linecap="butt"/>
<rect x="146" y="65.5" width="9" height="2.5" fill="#3a9ad9"/><rect x="149.3" y="62.3" width="2.5" height="9" fill="#3a9ad9"/>
<circle cx="180.5" cy="66.5" r="6.5" fill="none" stroke="#262626" stroke-width="1.6"/><path d="M185.5 71.5L193.0 78.5" stroke="#3a9ad9" stroke-width="3.2" stroke-linecap="butt"/>
<rect x="205" y="64" width="1.5" height="13" fill="#262626"/><rect x="221.5" y="64" width="1.5" height="13" fill="#262626"/><path d="M207.5 70L210.5 68V72Z M220.5 70L217.5 68V72Z" fill="#3a9ad9"/>
<path d="M249 62L242 70L249 78 M257 62L250 70L257 78" stroke="#262626" stroke-width="3.6" fill="none" stroke-linejoin="miter"/>
<path d="M272 62L279 70L272 78 M280 62L287 70L280 78" stroke="#262626" stroke-width="3.6" fill="none"/>
<path d="M307.5 61.5H325.0V78.5H307.5Z" fill="none" stroke="#262626" stroke-width="1.4" stroke-dasharray="2,1.3"/>
<path d="M343.5 61.5H361.0V78.5H343.5Z" fill="none" stroke="#262626" stroke-width="1.4" stroke-dasharray="2,1.3"/>
<circle cx="316.3" cy="70" r="5" fill="none" stroke="#3a9ad9" stroke-width="2.2" stroke-dasharray="6.5,4"/><path d="M317 63.2L320.5 65.5L316.5 67.5Z M322 72.5L319 76L318 72Z M311.5 74.5L310.5 70.5L314 71.5Z" fill="#3a9ad9"/>
<path d="M348.5 66L355.5 74M355.5 66L348.5 74" stroke="#3a9ad9" stroke-width="2.6"/>
<rect x="383.2" y="62.7" width="10.6" height="16.6" rx="1.3" fill="none" stroke="#262626" stroke-width="1.4"/><rect x="385.7" y="60.5" width="5.6" height="2.2" rx="0.6" fill="#262626"/>
<rect x="384.7" y="64.6" width="7.6" height="1.9" fill="#3a9ad9"/>
<rect x="384.7" y="67.3" width="7.6" height="1.9" fill="#3a9ad9"/>
<rect x="384.7" y="70.0" width="7.6" height="1.9" fill="#3a9ad9"/>
<rect x="384.7" y="72.7" width="7.6" height="1.9" fill="#3a9ad9"/>
<rect x="384.7" y="75.4" width="7.6" height="1.9" fill="#3a9ad9"/>
<rect x="413.2" y="62.7" width="10.6" height="16.6" rx="1.3" fill="none" stroke="#262626" stroke-width="1.4"/><rect x="415.7" y="60.5" width="5.6" height="2.2" rx="0.6" fill="#262626"/>
<rect x="414.7" y="75.2" width="7.6" height="2" fill="#3a9ad9"/>
<path d="M451 70.5H456M453.5 68V73" stroke="#3a0a3a" stroke-width="1"/>
<rect x="488.8" y="64" width="3.5" height="16.5" fill="#262626"/><path d="M484.6 70L490.55 63L496.5 70" stroke="#262626" stroke-width="3.6" fill="none" stroke-linejoin="miter" stroke-miterlimit="10"/>
<rect x="518.8" y="59.5" width="3.5" height="16.5" fill="#262626"/><path d="M514.6 70L520.55 77L526.5 70" stroke="#262626" stroke-width="3.6" fill="none" stroke-linejoin="miter" stroke-miterlimit="10"/>
<path d="M545.5 74.6L554.8 65.6" stroke="#1e1e1e" stroke-width="1.3"/><circle cx="544.1" cy="76" r="1.5" fill="#bfe0f0" stroke="#3a9ad9" stroke-width="0.9"/><circle cx="556.2" cy="64.2" r="1.5" fill="#bfe0f0" stroke="#3a9ad9" stroke-width="0.9"/>
<text x="569.5" y="74.5" font-family="Liberation Sans" font-size="20" font-weight="bold" fill="#3a9ad9" textLength="13" lengthAdjust="spacingAndGlyphs">A</text><text x="574" y="80.8" font-family="Liberation Serif" font-size="21" font-style="italic" font-weight="bold" fill="#262626" textLength="16" lengthAdjust="spacingAndGlyphs">A</text>
<path d="M608.90 69.60A7.8 7.8 0 1 1 612.23 75.99" stroke="#262626" stroke-width="2.3" fill="none"/>
<path d="M604.6 68.2L612.8 68.2L608.7 74.6Z" fill="#262626"/>
<path d="M614.3 65.3L616.6 71L620.3 68.3" stroke="#3a9ad9" stroke-width="1.3" fill="none"/>
<ellipse cx="652" cy="72.5" rx="2.6" ry="3.6" fill="#262626"/><ellipse cx="652" cy="67.8" rx="2.1" ry="2" fill="#262626"/>
<path d="M650.5 67Q648.5 63 648.3 60M653.5 67Q655.5 63 655.7 60M650 68.5Q646 66 643.5 64M654 68.5Q658 66 660.5 64M650 71Q646 73 644.5 77M654 71Q658 73 659.5 77M650.5 73Q648.5 77 648.3 80M653.5 73Q655.5 77 655.7 80" stroke="#262626" stroke-width="1.2" fill="none" stroke-linecap="round"/>
<rect x="678.7" y="61.7" width="19.8" height="17" rx="1.5" fill="none" stroke="#262626" stroke-width="1.6"/><rect x="678" y="61" width="21.2" height="3.8" rx="1" fill="#262626"/><path d="M680 71H683L685 68L687 74L689 66L691 72L693 70H697" stroke="#3a9ad9" stroke-width="1.3" fill="none"/>
<path d="M708 60V79H728" stroke="#262626" stroke-width="1.6" fill="none"/><path d="M710 71L714 68L717 70L721 65L724 67L727 62" stroke="#3a9ad9" stroke-width="1.5" fill="none"/><path d="M710 76L714 74L717 75.5L721 73L724 74L727 72" stroke="#262626" stroke-width="1.2" fill="none"/>
<circle cx="748" cy="71" r="7.5" fill="none" stroke="#262626" stroke-width="1.8"/><path d="M738.5 64.5A4 4 0 0 1 743 60.5Z M757.5 64.5A4 4 0 0 0 753 60.5Z" fill="#262626" stroke="#262626" stroke-width="1.5"/><path d="M742 79L740.5 81M754 79L755.5 81" stroke="#262626" stroke-width="1.6"/><path d="M748 66.5V71.5L751.5 69" stroke="#3a9ad9" stroke-width="1.5" fill="none"/>
<defs><linearGradient id="ddg" x1="0" y1="0" x2="0" y2="1"><stop offset="0" stop-color="#b4b4b4"/><stop offset="0.5" stop-color="#5a5a5a"/><stop offset="1" stop-color="#161616"/></linearGradient></defs>
<rect x="765" y="53" width="12" height="34" rx="1.5" fill="url(#ddg)"/><rect x="769" y="78" width="6" height="1.2" fill="#eee"/><path d="M768.5 80.5H775.5L772 84.5Z" fill="#eee"/>
</svg>
<svg style="position:absolute;left:0;top:0" width="1600" height="1160"><defs><linearGradient id="tabn" x1="0" y1="0" x2="0" y2="1"><stop offset="0" stop-color="#e4e4e4"/><stop offset="1" stop-color="#c8c8c8"/></linearGradient><linearGradient id="tabs" x1="0" y1="0" x2="0" y2="1"><stop offset="0" stop-color="#e0e0e0"/><stop offset="1" stop-color="#a8a8a8"/></linearGradient></defs><rect x="0" y="1115" width="1600" height="22" fill="#727272"/><rect x="0" y="1115" width="1600" height="1" fill="#7c7c7c"/><rect x="0" y="1136" width="1600" height="1" fill="#7c7c7c"/><rect x="0" y="1115" width="1" height="22" fill="#4a4a4a"/><rect x="1599" y="1115" width="1" height="22" fill="#5a5a5a"/><rect x="0" y="1137" width="1600" height="1" fill="#111"/><rect x="0" y="1138" width="1600" height="22" fill="#858585"/><path d="M7.5 1115V1131.5Q7.5 1134.5 10.5 1134.5H68Q71 1134.5 71 1131.5V1115" fill="url(#tabn)" stroke="#3a3a3a" stroke-width="1"/><path d="M74 1115V1131.5Q74 1134.5 77 1134.5H126Q129 1134.5 129 1131.5V1115" fill="url(#tabn)" stroke="#3a3a3a" stroke-width="1"/><path d="M132 1115V1131.5Q132 1134.5 135 1134.5H166Q169 1134.5 169 1131.5V1115" fill="url(#tabn)" stroke="#3a3a3a" stroke-width="1"/><path d="M172 1115V1131.5Q172 1134.5 175 1134.5H242.5Q245.5 1134.5 245.5 1131.5V1115" fill="url(#tabs)" stroke="#3a3a3a" stroke-width="1"/><text x="10.57" y="1128.20" font-family='"Liberation Sans",sans-serif' font-size="12" font-weight="normal" fill="#111" textLength="55.20" lengthAdjust="spacingAndGlyphs" >MSFT Day1</text><text x="76.42" y="1128.20" font-family='"Liberation Sans",sans-serif' font-size="12" font-weight="normal" fill="#111" textLength="47.45" lengthAdjust="spacingAndGlyphs" >Back Test</text><text x="134.50" y="1128.20" font-family='"Liberation Sans",sans-serif' font-size="12" font-weight="normal" fill="#111" textLength="28.87" lengthAdjust="spacingAndGlyphs" >Forex</text><text x="175.86" y="1128.20" font-family='"Liberation Sans",sans-serif' font-size="12" font-weight="bold" fill="#111" textLength="63.87" lengthAdjust="spacingAndGlyphs" >GOOG Day1</text><path d="M1569 1124H1578L1573.5 1129Z" fill="#111"/><path d="M1585.5 1122.5L1593 1130M1593 1122.5L1585.5 1130" stroke="#111" stroke-width="1.4"/><text x="3.40" y="1153.70" font-family='"Liberation Sans",sans-serif' font-size="12" font-weight="normal" fill="#1a1a1a" textLength="344.00" lengthAdjust="spacingAndGlyphs" >GOOG | 22.08.2016 7:00:00 | Close: 772,15 | Bar: 89 | Y: 847,30</text><text x="1487.50" y="1153.80" font-family='"Liberation Sans",sans-serif' font-size="12" font-weight="normal" fill="#1a1a1a" textLength="48.11" lengthAdjust="spacingAndGlyphs" >05:23:11</text><defs><filter id="glow" x="-5%" y="-50%" width="110%" height="200%"><feMorphology in="SourceAlpha" operator="dilate" radius="1.6" result="d"/><feGaussianBlur in="d" stdDeviation="2.2" result="b"/><feFlood flood-color="#fff"/><feComposite in2="b" operator="in" result="w"/><feMerge><feMergeNode in="w"/><feMergeNode in="SourceGraphic"/></feMerge></filter></defs><g filter="url(#glow)"><g transform="translate(159.4,0) skewX(-8)"><text x="347.38" y="1134.00" font-family='"Liberation Serif",serif' font-size="24" font-weight="normal" font-style="italic" fill="#f02a36" textLength="837.65" lengthAdjust="spacingAndGlyphs" >www.forex-warez.com, andreybbrv@gmail.com, Skype: andreybbrv</text></g></g><path d="M1600 1057H1583Q1575 1057 1575 1065V1096Q1575 1100 1580 1102L1600 1111Z" fill="#fff"/><rect x="1579" y="1063" width="21" height="20" fill="#1a8ce8"/><circle cx="1589.5" cy="1073" r="8.3" fill="#fff"/><path d="M1583 1073H1596M1585.5 1070.5L1583 1073L1585.5 1075.5M1593.5 1070.5L1596 1073L1593.5 1075.5" stroke="#1a8ce8" stroke-width="1.8" fill="none"/></svg>
<svg style="position:absolute;left:0;top:0" width="1600" height="1160"><defs><linearGradient id="btng" x1="0" y1="0" x2="0" y2="1"><stop offset="0" stop-color="#e8e8e8"/><stop offset="1" stop-color="#c6c6c6"/></linearGradient><linearGradient id="tsel" x1="0" y1="0" x2="0" y2="1"><stop offset="0" stop-color="#c8c8c8"/><stop offset="1" stop-color="#8c8c8c"/></linearGradient><linearGradient id="tun" x1="0" y1="0" x2="0" y2="1"><stop offset="0" stop-color="#e4e4e4"/><stop offset="1" stop-color="#c4c4c4"/></linearGradient></defs><rect x="263" y="315" width="1073" height="31" fill="#fff"/><rect x="263" y="346" width="1073" height="491" fill="#5b5b5b"/><path d="M263.5 346V836.5H1335.5V346" stroke="#c8c8c8" stroke-width="1" fill="none"/><g transform="translate(272,322)"><rect width="16" height="16" fill="#02040c"/><path d="M2.5 16V9Q3 2 3.6 0Q5.5 3 6.5 8L7.2 16Z" fill="#2638a8"/><path d="M3.5 0.5V12" stroke="#38b8f8" stroke-width="1"/><path d="M5 4L6 9" stroke="#8a78e8" stroke-width="1"/><path d="M0 12.5L1.5 10.5L3 12.5L4.5 10L6 12.5L7.5 10.5L9 12.5L10.5 10L12 12.5L13.5 10.5L15 12L16 10.5" stroke="#30d0f0" stroke-width="1.1" fill="none"/></g><text x="292.43" y="335.00" font-family='"Liberation Sans",sans-serif' font-size="12" font-weight="normal" fill="#000" textLength="115.08" lengthAdjust="spacingAndGlyphs" >Cycle Scanner Results</text><path d="M1315 325L1325 335M1325 325L1315 335" stroke="#000" stroke-width="1.1"/><text x="280.63" y="377.50" font-family='"Liberation Sans",sans-serif' font-size="19" font-weight="bold" fill="#0000ff" textLength="251.10" lengthAdjust="spacingAndGlyphs" >LvT Cycle Scanner Results</text><text x="617.92" y="377.90" font-family='"Liberation Sans",sans-serif' font-size="14" font-weight="bold" fill="#6a7d92" textLength="183.48" lengthAdjust="spacingAndGlyphs" >GOOG Day1 - GOOG.close</text><rect x="1112.5" y="357.5" width="102" height="22" fill="url(#btng)" stroke="#000" stroke-width="1"/><rect x="1220.5" y="358.5" width="102" height="22" fill="url(#btng)" stroke="#000" stroke-width="1"/><text x="1117.44" y="371.00" font-family='"Liberation Sans",sans-serif' font-size="12" font-weight="normal" fill="#111" textLength="90.08" lengthAdjust="spacingAndGlyphs" >Copy to Clipboard</text><text x="1255.72" y="372.00" font-family='"Liberation Sans",sans-serif' font-size="12" font-weight="normal" fill="#111" textLength="29.83" lengthAdjust="spacingAndGlyphs" >Close</text><rect x="281.5" y="411.5" width="1041" height="383" fill="#5b5b5b" stroke="#000" stroke-width="1"/><rect x="282" y="412" width="1040" height="1" fill="#5a5a5a"/><rect x="285" y="416" width="1035" height="375" fill="#d4d4d4"/><rect x="285" y="416" width="1035" height="1" fill="#e8e8e8"/><rect x="285" y="416" width="1" height="375" fill="#e8e8e8"/><rect x="1320" y="416" width="2" height="377" fill="#6c6c6c"/><rect x="285" y="791" width="1037" height="2" fill="#6c6c6c"/><path d="M362.5 412V395.5Q362.5 392.5 365.5 392.5H467.5Q470.5 392.5 470.5 395.5V412" fill="url(#tun)" stroke="#000" stroke-width="1"/><path d="M281.5 412V392.5Q281.5 389.5 284.5 389.5H357.5Q360.5 389.5 360.5 392.5V412" fill="url(#tsel)" stroke="#000" stroke-width="1"/><rect x="284.5" y="401.5" width="0" height="0"/><rect x="284.5" y="392.5" width="73" height="17" fill="none" stroke="#000" stroke-width="1" stroke-dasharray="1,1" shape-rendering="crispEdges"/><text x="288.08" y="404.00" font-family='"Liberation Sans",sans-serif' font-size="12" font-weight="normal" fill="#111" textLength="65.22" lengthAdjust="spacingAndGlyphs" >Spectrum Plot</text><text x="366.16" y="405.90" font-family='"Liberation Sans",sans-serif' font-size="12" font-weight="normal" fill="#111" textLength="98.81" lengthAdjust="spacingAndGlyphs" >Dominant Cycle Data</text></svg>
<svg style="position:absolute;left:0;top:0" width="1600" height="1160"><path d="M350.5 741V733.5 M352.5 741V730.5 M354.5 741V725.6 M356.5 741V719.8 M358.5 741V722.7 M360.5 741V729.5 M362.5 741V731.8 M364.5 741V726.7 M366.5 741V716.6 M368.5 741V700.5 M370.5 741V689.0 M372.5 741V676.3 M374.5 741V685.3 M376.5 741V688.3 M378.5 741V672.9 M380.5 741V665.2 M382.5 741V666.9 M384.5 741V689.1 M386.5 741V708.9 M388.5 741V720.5 M390.5 741V710.5 M392.5 741V696.5 M394.5 741V637.0 M396.5 741V680.6 M398.5 741V695.7 M400.5 741V676.8 M402.5 741V690.0 M404.5 741V708.3 M406.5 741V721.9 M408.5 741V726.2 M410.5 741V719.5 M412.5 741V709.8 M414.5 741V693.7 M416.5 741V681.6 M418.5 741V670.7 M420.5 741V661.7 M422.5 741V664.3 M424.5 741V686.0 M426.5 741V704.4 M428.5 741V683.5 M431.5 741V663.6 M433.5 741V643.9 M435.5 741V624.2 M437.5 741V625.6 M439.5 741V635.1 M441.5 741V654.8 M443.5 741V671.0 M445.5 741V671.4 M447.5 741V663.1 M449.5 741V654.8 M451.5 741V651.0 M453.5 741V649.1 M455.5 741V652.7 M457.5 741V660.8 M459.5 741V671.3 M461.5 741V681.8 M464.5 741V672.5 M467.5 741V646.4 M470.5 741V615.5 M473.5 741V595.5 M476.5 741V579.3 M480.5 741V565.7 M483.5 741V556.0 M486.5 741V552.9 M489.5 741V554.7 M492.5 741V559.6 M495.5 741V568.5 M498.5 741V577.4 M501.5 741V586.2 M504.5 741V594.2 M508.5 741V602.2 M511.5 741V609.9 M514.5 741V617.6 M517.5 741V623.7 M520.5 741V626.0 M523.5 741V628.2 M526.5 741V627.8 M529.5 741V626.7 M532.5 741V625.5 M536.5 741V624.3 M539.5 741V623.0 M542.5 741V624.4 M545.5 741V625.9 M548.5 741V628.7 M551.5 741V631.7 M554.5 741V634.7 M557.5 741V639.6 M560.5 741V644.8 M564.5 741V649.9 M567.5 741V655.0 M570.5 741V660.1 M573.5 741V665.1 M576.5 741V670.2 M579.5 741V671.6 M582.5 741V669.3 M585.5 741V665.6 M588.5 741V658.5 M592.5 741V651.4 M595.5 741V644.3 M598.5 741V635.8 M601.5 741V625.4 M604.5 741V615.0 M607.5 741V605.2 M610.5 741V595.4 M613.5 741V585.5 M617.5 741V575.1 M620.5 741V564.1 M623.5 741V553.1 M626.5 741V543.2 M629.5 741V533.4 M632.5 741V523.6 M635.5 741V516.2 M638.5 741V511.1 M641.5 741V506.0 M645.5 741V501.7 M648.5 741V498.5 M651.5 741V495.3 M654.5 741V492.0 M657.5 741V488.5 M660.5 741V485.1 M663.5 741V481.9 M666.5 741V479.1 M669.5 741V476.4 M673.5 741V473.9 M676.5 741V471.8 M679.5 741V469.7 M682.5 741V467.6 M685.5 741V466.7 M688.5 741V466.3 M691.5 741V466.3 M694.5 741V466.3 M697.5 741V466.3 M701.5 741V466.6 M704.5 741V467.5 M707.5 741V468.4 M710.5 741V469.5 M713.5 741V470.9 M716.5 741V472.2 M719.5 741V473.7 M722.5 741V475.5 M725.5 741V477.3 M729.5 741V479.3 M732.5 741V481.6 M735.5 741V483.9 M738.5 741V486.1 M741.5 741V488.6 M744.5 741V491.2 M747.5 741V493.9 M750.5 741V496.5 M753.5 741V499.1 M757.5 741V501.7 M760.5 741V504.1 M763.5 741V506.5 M766.5 741V508.9 M769.5 741V511.3 M772.5 741V513.7 M775.5 741V516.0 M778.5 741V518.4 M782.5 741V520.8 M785.5 741V523.2 M788.5 741V525.7 M791.5 741V528.2 M794.5 741V530.7 M797.5 741V533.1 M800.5 741V535.6 M803.5 741V538.1 M806.5 741V540.5 M810.5 741V543.0 M813.5 741V545.5 M816.5 741V547.8 M819.5 741V550.1 M822.5 741V552.5 M825.5 741V554.8 M828.5 741V557.1 M831.5 741V559.5 M834.5 741V561.8 M838.5 741V564.1 M841.5 741V566.6 M844.5 741V569.5 M847.5 741V572.5 M850.5 741V575.4 M853.5 741V578.1 M856.5 741V580.1 M859.5 741V582.1 M862.5 741V584.2 M866.5 741V586.2 M869.5 741V588.2 M872.5 741V590.2 M875.5 741V592.3 M878.5 741V594.3 M881.5 741V596.3 M884.5 741V598.3 M887.5 741V600.3 M890.5 741V602.4 M894.5 741V604.4 M897.5 741V606.3 M900.5 741V607.9 M903.5 741V609.5 M906.5 741V611.1 M909.5 741V612.8 M912.5 741V614.4 M915.5 741V616.0 M918.5 741V617.6 M922.5 741V619.3 M925.5 741V620.9 M928.5 741V622.5 M931.5 741V624.2 M934.5 741V625.7 M937.5 741V627.0 M940.5 741V628.4 M943.5 741V629.7 M946.5 741V631.0 M950.5 741V632.4 M953.5 741V633.7 M956.5 741V635.0 M959.5 741V636.4 M962.5 741V637.7 M965.5 741V639.0 M968.5 741V640.4 M971.5 741V641.7 M975.5 741V642.9 M978.5 741V644.1 M981.5 741V645.3 M984.5 741V646.5 M987.5 741V647.7 M990.5 741V649.0 M993.5 741V650.2 M996.5 741V651.4 M999.5 741V652.6 M1003.5 741V653.8 M1006.5 741V655.0 M1009.5 741V656.2 M1012.5 741V657.3 M1015.5 741V658.3 M1018.5 741V659.4 M1021.5 741V660.4 M1024.5 741V661.5 M1027.5 741V662.6 M1031.5 741V663.6 M1034.5 741V664.7 M1037.5 741V665.7 M1040.5 741V666.8 M1043.5 741V667.8 M1046.5 741V668.9 M1049.5 741V669.5 M1052.5 741V670.2 M1055.5 741V670.9 M1059.5 741V671.5 M1062.5 741V672.2 M1065.5 741V672.9 M1068.5 741V673.5 M1071.5 741V674.2 M1074.5 741V674.9 M1077.5 741V675.5 M1080.5 741V676.2 M1083.5 741V676.9 M1087.5 741V677.5 M1090.5 741V678.1 M1093.5 741V678.6 M1096.5 741V679.2 M1099.5 741V679.8 M1102.5 741V680.4 M1105.5 741V680.9 M1108.5 741V681.4 M1111.5 741V681.9 M1115.5 741V682.4 M1118.5 741V682.9 M1121.5 741V683.4 M1124.5 741V683.9 M1127.5 741V684.5 M1130.5 741V685.0 M1133.5 741V685.5 M1136.5 741V686.1 M1139.5 741V686.6 M1143.5 741V687.1 M1146.5 741V687.7 M1149.5 741V688.2 M1152.5 741V688.7 M1155.5 741V689.3 M1158.5 741V689.8 M1161.5 741V690.3 M1164.5 741V690.8 M1168.5 741V691.3 M1171.5 741V691.8 M1174.5 741V692.2 M1177.5 741V692.7 M1180.5 741V693.2 M1183.5 741V693.7 M1186.5 741V694.1 M1189.5 741V694.6 M1192.5 741V695.1 M1196.5 741V695.5 M1199.5 741V696.0 M1202.5 741V696.5 M1205.5 741V696.9 M1208.5 741V697.4 M1211.5 741V697.8 M1214.5 741V698.2 M1217.5 741V698.6 M1220.5 741V699.0 M1224.5 741V699.4 M1227.5 741V699.8 M1230.5 741V700.2 M1233.5 741V700.6 M1236.5 741V701.0 M1239.5 741V701.4 M1242.5 741V701.7 M1245.5 741V702.0 M1248.5 741V702.3 M1252.5 741V702.7 M1255.5 741V703.0 M1258.5 741V703.3 M1261.5 741V703.6 M1264.5 741V704.0 M1267.5 741V704.3" stroke="#2e8b57" stroke-width="1" fill="none" shape-rendering="crispEdges"/><polyline points="347.24,741.00 350.04,732.00 352.07,730.00 356.27,718.00 360.63,732.60 362.81,731.00 365.61,718.00 367.16,704.00 370.59,684.60 372.46,672.20 374.95,695.40 378.06,671.70 378.68,665.20 381.80,665.20 385.53,706.20 388.33,722.30 392.07,696.50 394.25,632.40 395.80,675.00 397.36,703.00 400.47,673.90 403.90,706.20 407.32,729.30 411.68,714.80 414.79,690.00 420.08,661.50 422.26,662.60 426.31,706.00 428.80,680.30 434.72,622.70 437.83,627.50 442.19,670.00 444.06,673.90 449.35,652.30 453.39,648.50 455.88,656.00 461.49,685.00 465.22,666.25 469.58,620.00 472.07,602.00 478.30,569.60 482.97,555.00 486.08,552.70 490.75,556.00 501.02,585.40 507.87,603.00 515.97,623.00 523.75,628.70 531.22,626.00 538.69,623.00 545.23,626.00 554.57,635.00 565.46,653.00 577.60,672.70 584.45,667.70 596.59,640.00 603.75,616.00 614.96,580.60 623.05,552.00 633.64,518.75 643.29,503.00 652.63,493.40 661.97,483.00 671.30,474.70 682.51,467.20 686.87,466.30 699.32,466.25 708.66,469.00 718.00,473.00 727.34,478.40 739.79,487.50 755.67,501.00 783.68,522.50 812.01,545.00 840.03,566.00 852.17,577.50 895.44,605.60 933.11,625.30 970.46,641.30 1008.13,656.00 1045.80,668.80 1083.15,676.80 1100.90,680.20 1120.82,683.40 1162.85,690.60 1204.56,696.90 1235.69,701.00 1269.00,704.50" stroke="#2e8b57" stroke-width="1" fill="none" shape-rendering="crispEdges"/><path d="M335.5 466V741.5H1270" stroke="#000" stroke-width="1" fill="none" shape-rendering="crispEdges"/><path d="M335.5 741V747 M351.5 741V745 M366.5 741V747 M382.5 741V745 M397.5 741V747 M413.5 741V745 M428.5 741V747 M444.5 741V745 M460.5 741V747 M475.5 741V745 M491.5 741V747 M506.5 741V745 M522.5 741V747 M537.5 741V745 M553.5 741V747 M569.5 741V745 M584.5 741V747 M600.5 741V745 M615.5 741V747 M631.5 741V745 M646.5 741V747 M662.5 741V745 M678.5 741V747 M693.5 741V745 M709.5 741V747 M724.5 741V745 M740.5 741V747 M755.5 741V745 M771.5 741V747 M786.5 741V745 M802.5 741V747 M818.5 741V745 M833.5 741V747 M849.5 741V745 M864.5 741V747 M880.5 741V745 M895.5 741V747 M911.5 741V745 M927.5 741V747 M942.5 741V745 M958.5 741V747 M973.5 741V745 M989.5 741V747 M1004.5 741V745 M1020.5 741V747 M1036.5 741V745 M1051.5 741V747 M1067.5 741V745 M1082.5 741V747 M1098.5 741V745 M1113.5 741V747 M1129.5 741V745 M1144.5 741V747 M1160.5 741V745 M1176.5 741V747 M1191.5 741V745 M1207.5 741V747 M1222.5 741V745 M1238.5 741V747 M1253.5 741V745 M1269.5 741V747" stroke="#000" stroke-width="1" fill="none" shape-rendering="crispEdges"/><text x="332.28" y="758.50" font-family='"Liberation Sans",sans-serif' font-size="11.5" font-weight="normal" fill="#111" textLength="6.40" lengthAdjust="spacingAndGlyphs" >0</text><text x="359.96" y="758.50" font-family='"Liberation Sans",sans-serif' font-size="11.5" font-weight="normal" fill="#111" textLength="12.79" lengthAdjust="spacingAndGlyphs" >10</text><text x="391.26" y="758.50" font-family='"Liberation Sans",sans-serif' font-size="11.5" font-weight="normal" fill="#111" textLength="12.79" lengthAdjust="spacingAndGlyphs" >20</text><text x="422.45" y="758.50" font-family='"Liberation Sans",sans-serif' font-size="11.5" font-weight="normal" fill="#111" textLength="12.79" lengthAdjust="spacingAndGlyphs" >30</text><text x="453.69" y="758.50" font-family='"Liberation Sans",sans-serif' font-size="11.5" font-weight="normal" fill="#111" textLength="12.79" lengthAdjust="spacingAndGlyphs" >40</text><text x="484.71" y="758.50" font-family='"Liberation Sans",sans-serif' font-size="11.5" font-weight="normal" fill="#111" textLength="12.79" lengthAdjust="spacingAndGlyphs" >50</text><text x="515.78" y="758.50" font-family='"Liberation Sans",sans-serif' font-size="11.5" font-weight="normal" fill="#111" textLength="12.79" lengthAdjust="spacingAndGlyphs" >60</text><text x="546.91" y="758.50" font-family='"Liberation Sans",sans-serif' font-size="11.5" font-weight="normal" fill="#111" textLength="12.79" lengthAdjust="spacingAndGlyphs" >70</text><text x="578.10" y="758.50" font-family='"Liberation Sans",sans-serif' font-size="11.5" font-weight="normal" fill="#111" textLength="12.79" lengthAdjust="spacingAndGlyphs" >80</text><text x="609.17" y="758.50" font-family='"Liberation Sans",sans-serif' font-size="11.5" font-weight="normal" fill="#111" textLength="12.79" lengthAdjust="spacingAndGlyphs" >90</text><text x="636.97" y="758.50" font-family='"Liberation Sans",sans-serif' font-size="11.5" font-weight="normal" fill="#111" textLength="19.19" lengthAdjust="spacingAndGlyphs" >100</text><text x="668.50" y="758.50" font-family='"Liberation Sans",sans-serif' font-size="11.5" font-weight="normal" fill="#111" textLength="18.33" lengthAdjust="spacingAndGlyphs" >110</text><text x="699.23" y="758.50" font-family='"Liberation Sans",sans-serif' font-size="11.5" font-weight="normal" fill="#111" textLength="19.19" lengthAdjust="spacingAndGlyphs" >120</text><text x="730.36" y="758.50" font-family='"Liberation Sans",sans-serif' font-size="11.5" font-weight="normal" fill="#111" textLength="19.19" lengthAdjust="spacingAndGlyphs" >130</text><text x="761.49" y="758.50" font-family='"Liberation Sans",sans-serif' font-size="11.5" font-weight="normal" fill="#111" textLength="19.19" lengthAdjust="spacingAndGlyphs" >140</text><text x="792.62" y="758.50" font-family='"Liberation Sans",sans-serif' font-size="11.5" font-weight="normal" fill="#111" textLength="19.19" lengthAdjust="spacingAndGlyphs" >150</text><text x="823.75" y="758.50" font-family='"Liberation Sans",sans-serif' font-size="11.5" font-weight="normal" fill="#111" textLength="19.19" lengthAdjust="spacingAndGlyphs" >160</text><text x="854.88" y="758.50" font-family='"Liberation Sans",sans-serif' font-size="11.5" font-weight="normal" fill="#111" textLength="19.19" lengthAdjust="spacingAndGlyphs" >170</text><text x="886.01" y="758.50" font-family='"Liberation Sans",sans-serif' font-size="11.5" font-weight="normal" fill="#111" textLength="19.19" lengthAdjust="spacingAndGlyphs" >180</text><text x="917.14" y="758.50" font-family='"Liberation Sans",sans-serif' font-size="11.5" font-weight="normal" fill="#111" textLength="19.19" lengthAdjust="spacingAndGlyphs" >190</text><text x="948.44" y="758.50" font-family='"Liberation Sans",sans-serif' font-size="11.5" font-weight="normal" fill="#111" textLength="19.19" lengthAdjust="spacingAndGlyphs" >200</text><text x="979.57" y="758.50" font-family='"Liberation Sans",sans-serif' font-size="11.5" font-weight="normal" fill="#111" textLength="19.19" lengthAdjust="spacingAndGlyphs" >210</text><text x="1010.70" y="758.50" font-family='"Liberation Sans",sans-serif' font-size="11.5" font-weight="normal" fill="#111" textLength="19.19" lengthAdjust="spacingAndGlyphs" >220</text><text x="1041.83" y="758.50" font-family='"Liberation Sans",sans-serif' font-size="11.5" font-weight="normal" fill="#111" textLength="19.19" lengthAdjust="spacingAndGlyphs" >230</text><text x="1072.96" y="758.50" font-family='"Liberation Sans",sans-serif' font-size="11.5" font-weight="normal" fill="#111" textLength="19.19" lengthAdjust="spacingAndGlyphs" >240</text><text x="1104.09" y="758.50" font-family='"Liberation Sans",sans-serif' font-size="11.5" font-weight="normal" fill="#111" textLength="19.19" lengthAdjust="spacingAndGlyphs" >250</text><text x="1135.22" y="758.50" font-family='"Liberation Sans",sans-serif' font-size="11.5" font-weight="normal" fill="#111" textLength="19.19" lengthAdjust="spacingAndGlyphs" >260</text><text x="1166.35" y="758.50" font-family='"Liberation Sans",sans-serif' font-size="11.5" font-weight="normal" fill="#111" textLength="19.19" lengthAdjust="spacingAndGlyphs" >270</text><text x="1197.48" y="758.50" font-family='"Liberation Sans",sans-serif' font-size="11.5" font-weight="normal" fill="#111" textLength="19.19" lengthAdjust="spacingAndGlyphs" >280</text><text x="1228.61" y="758.50" font-family='"Liberation Sans",sans-serif' font-size="11.5" font-weight="normal" fill="#111" textLength="19.19" lengthAdjust="spacingAndGlyphs" >290</text><text x="1259.80" y="758.50" font-family='"Liberation Sans",sans-serif' font-size="11.5" font-weight="normal" fill="#111" textLength="19.19" lengthAdjust="spacingAndGlyphs" >300</text><text x="740.61" y="436.25" font-family='"Liberation Sans",sans-serif' font-size="13" font-weight="bold" fill="#111" textLength="116.86" lengthAdjust="spacingAndGlyphs" >Spectrum Analysis</text><text x="717.47" y="450.50" font-family='"Liberation Sans",sans-serif' font-size="11.5" font-weight="normal" fill="#111" textLength="171.88" lengthAdjust="spacingAndGlyphs" >Top 5 (Length): 115, 48, 32, 65, 19</text><text x="291.00" y="460.00" font-family='"Liberation Sans",sans-serif' font-size="11.5" font-weight="normal" fill="#111" textLength="51.54" lengthAdjust="spacingAndGlyphs" >Amplitude</text><text x="752.43" y="774.60" font-family='"Liberation Sans",sans-serif' font-size="11.5" font-weight="normal" fill="#111" textLength="100.32" lengthAdjust="spacingAndGlyphs" >Cycle Length (Bars)</text><text x="680.52" y="463.60" font-family='"Liberation Sans",sans-serif' font-size="11.5" font-weight="normal" fill="#111" textLength="24.57" lengthAdjust="spacingAndGlyphs" >1641</text><text x="471.89" y="550.00" font-family='"Liberation Sans",sans-serif' font-size="11.5" font-weight="normal" fill="#111" textLength="24.57" lengthAdjust="spacingAndGlyphs" >1125</text><text x="384.32" y="630.00" font-family='"Liberation Sans",sans-serif' font-size="11.5" font-weight="normal" fill="#111" textLength="19.23" lengthAdjust="spacingAndGlyphs" >646</text><text x="425.05" y="620.00" font-family='"Liberation Sans",sans-serif' font-size="11.5" font-weight="normal" fill="#111" textLength="18.37" lengthAdjust="spacingAndGlyphs" >705</text><text x="527.73" y="620.70" font-family='"Liberation Sans",sans-serif' font-size="11.5" font-weight="normal" fill="#111" textLength="18.91" lengthAdjust="spacingAndGlyphs" >699</text></svg>
</body></html>
